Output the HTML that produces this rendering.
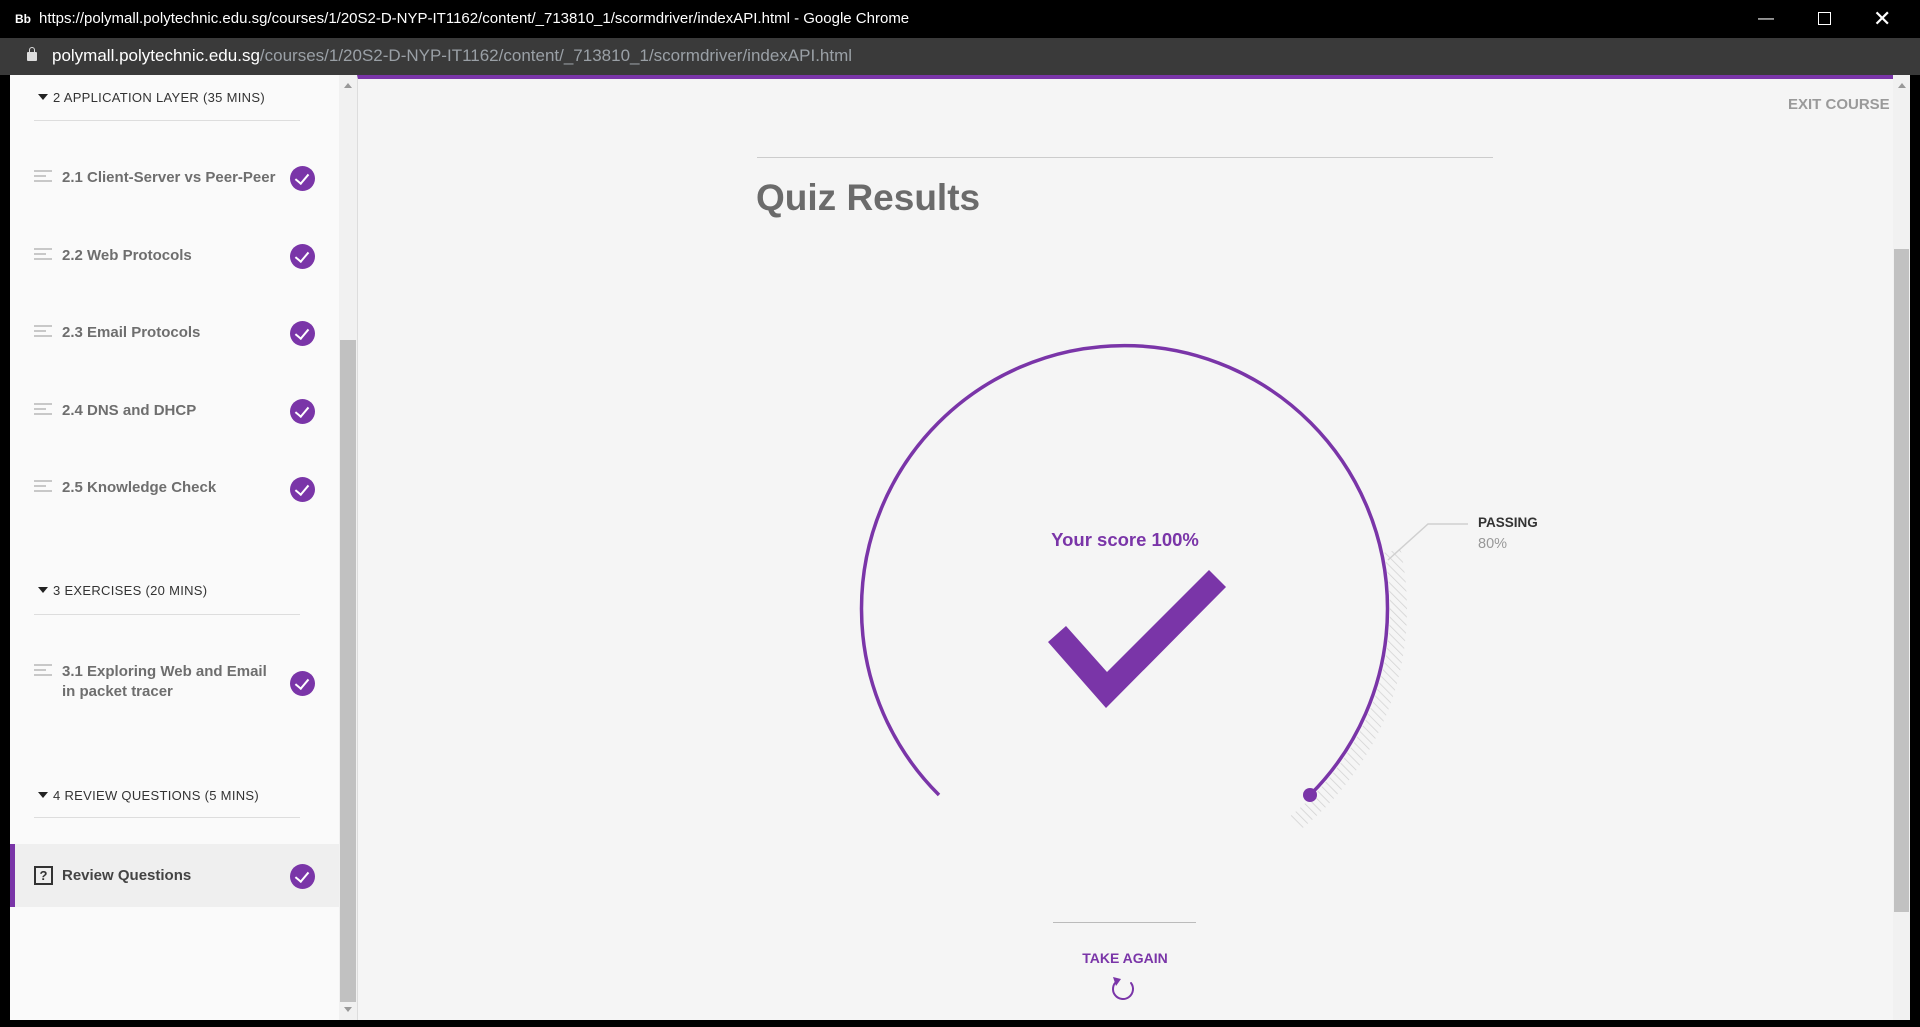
<!DOCTYPE html>
<html><head><meta charset="utf-8"><style>
*{margin:0;padding:0;box-sizing:border-box}
body{width:1920px;height:1027px;background:#000;position:relative;overflow:hidden;font-family:"Liberation Sans",sans-serif}
.abs{position:absolute}
#title{left:0;top:0;width:1920px;height:38px;background:#000;color:#fff;font-size:15px;line-height:38px}
#addr{left:0;top:38px;width:1920px;height:37px;background:#3a3a3a;color:#9aa0a6;font-size:17px;line-height:36px}
#side{left:10px;top:75px;width:329px;height:945px;background:#fafafa}
#sscroll{left:339px;top:75px;width:18px;height:945px;background:#f1f1f1}
#main{left:357px;top:75px;width:1536px;height:945px;background:#f5f5f5;border-top:4px solid #7a35a8;border-left:1px solid #ddd}
#mscroll{left:1893px;top:75px;width:17px;height:945px;background:#f1f1f1}
.hdr{left:53px;font-size:13px;color:#333;letter-spacing:.3px}
.hdr:before{content:"";position:absolute;left:-15px;top:4px;border-left:5px solid transparent;border-right:5px solid transparent;border-top:6px solid #222}
.div{left:34px;width:266px;height:1px;background:#ddd}
.item{left:62px;font-size:15px;font-weight:bold;color:#6e6e6e;line-height:20px}
.lines{left:34px;width:18px;height:12px}
.lines i{display:block;height:2px;background:#c8c8c8;margin-bottom:3px}
.ck{left:290px;width:25px;height:25px;border-radius:50%;background:#7a35a8}
.ck:after{content:"";position:absolute;left:8px;top:5px;width:6px;height:11px;border-right:2.5px solid #fff;border-bottom:2.5px solid #fff;transform:rotate(40deg)}
</style></head><body>
<div id="title" class="abs"><span style="font-weight:bold;font-size:12px;margin-left:15px;margin-right:8px">Bb</span>https://polymall.polytechnic.edu.sg/courses/1/20S2-D-NYP-IT1162/content/_713810_1/scormdriver/indexAPI.html - Google Chrome
<span class="abs" style="left:1758px;top:0;font-size:16px">—</span>
<span class="abs" style="left:1818px;top:12px;width:13px;height:13px;border:1.5px solid #fff"></span>
<span class="abs" style="left:1873px;top:0;font-size:22px">✕</span></div>
<div id="addr" class="abs"><span class="abs" style="left:27px;top:14px;width:10px;height:9px;background:#ddd;border-radius:1px"></span><span class="abs" style="left:29px;top:9px;width:6px;height:7px;border:1.5px solid #ddd;border-bottom:none;border-radius:3px 3px 0 0"></span><span style="margin-left:52px;color:#fff">polymall.polytechnic.edu.sg</span>/courses/1/20S2-D-NYP-IT1162/content/_713810_1/scormdriver/indexAPI.html</div>

<div id="side" class="abs"></div>
<div class="abs hdr" style="top:90px">2 APPLICATION LAYER (35 MINS)</div>
<div class="abs div" style="top:120px"></div>

<div class="abs lines" style="top:170px"><i></i><i style="width:12px"></i><i></i></div>
<div class="abs item" style="top:168px">2.1 Client-Server vs Peer-Peer</div><div class="abs ck" style="top:166px"></div>
<div class="abs lines" style="top:248px"><i></i><i style="width:12px"></i><i></i></div>
<div class="abs item" style="top:246px">2.2 Web Protocols</div><div class="abs ck" style="top:244px"></div>
<div class="abs lines" style="top:325px"><i></i><i style="width:12px"></i><i></i></div>
<div class="abs item" style="top:323px">2.3 Email Protocols</div><div class="abs ck" style="top:321px"></div>
<div class="abs lines" style="top:403px"><i></i><i style="width:12px"></i><i></i></div>
<div class="abs item" style="top:401px">2.4 DNS and DHCP</div><div class="abs ck" style="top:399px"></div>
<div class="abs lines" style="top:480px"><i></i><i style="width:12px"></i><i></i></div>
<div class="abs item" style="top:478px">2.5 Knowledge Check</div><div class="abs ck" style="top:477px"></div>

<div class="abs hdr" style="top:583px">3 EXERCISES (20 MINS)</div>
<div class="abs div" style="top:614px"></div>
<div class="abs lines" style="top:664px"><i></i><i style="width:12px"></i><i></i></div>
<div class="abs item" style="top:662px">3.1 Exploring Web and Email<br>in packet tracer</div><div class="abs ck" style="top:671px"></div>

<div class="abs hdr" style="top:788px">4 REVIEW QUESTIONS (5 MINS)</div>
<div class="abs div" style="top:817px"></div>
<div class="abs" style="left:10px;top:844px;width:329px;height:63px;background:#efefef;border-left:5px solid #7a35a8"></div>
<div class="abs" style="left:34px;top:866px;width:19px;height:19px;border:2px solid #333;font-size:13px;font-weight:bold;text-align:center;line-height:15px;color:#333">?</div>
<div class="abs item" style="top:866px;color:#444">Review Questions</div><div class="abs ck" style="top:864px"></div>

<div id="sscroll" class="abs"><div class="abs" style="left:5px;top:8px;border-left:4px solid transparent;border-right:4px solid transparent;border-bottom:5px solid #999"></div><div class="abs" style="left:1px;top:265px;width:16px;height:662px;background:#c1c1c1"></div><div class="abs" style="left:5px;top:932px;border-left:4px solid transparent;border-right:4px solid transparent;border-top:5px solid #999"></div></div>

<div id="main" class="abs"></div>
<div id="mscroll" class="abs"><div class="abs" style="left:1px;top:174px;width:15px;height:663px;background:#c1c1c1"></div><div class="abs" style="left:5px;top:8px;border-left:4px solid transparent;border-right:4px solid transparent;border-bottom:5px solid #999"></div></div>

<div class="abs" style="left:1788px;top:96px;font-size:15px;font-weight:bold;color:#9a9a9a">EXIT COURSE</div>
<div class="abs" style="left:757px;top:157px;width:736px;height:1px;background:#ccc"></div>
<div class="abs" style="left:756px;top:177px;font-size:37px;font-weight:bold;color:#6b6b6b">Quiz Results</div>

<svg class="abs" style="left:0;top:0" width="1920" height="1027">
<defs>
<pattern id="hp" width="6" height="6" patternUnits="userSpaceOnUse" patternTransform="rotate(-45)"><line x1="0" y1="0" x2="0" y2="6" stroke="#d2d2d2" stroke-width="1.5"/></pattern>
<clipPath id="cl"><circle cx="1125" cy="609" r="282"/></clipPath>
</defs>
<path d="M1125 609 L1386 555 A265 265 0 0 1 1310 795 Z" fill="none"/>
<g clip-path="url(#cl)"><path d="M1125 609 L1420 545 L1420 830 L1300 830 Z" fill="url(#hp)"/></g>
<circle cx="1125" cy="609" r="265" fill="#f5f5f5"/>
<path d="M939 795 A263 263 0 1 1 1310 795" fill="none" stroke="#7a35a8" stroke-width="3.5"/>
<circle cx="1310" cy="795" r="7" fill="#7a35a8"/>
<polyline points="1388,560 1428,524 1468,524" fill="none" stroke="#d0d0d0" stroke-width="1.5"/>
<polygon points="1048,642 1066,626 1107,672 1209,570 1226,587 1106,708" fill="#7a35a8"/>
<path d="M1131 983 A10 10 0 1 1 1117 981" fill="none" stroke="#7a35a8" stroke-width="2" stroke-linecap="round"/>
<polygon points="1113,977 1121,979 1116,986" fill="#7a35a8"/>
</svg>
<div class="abs" style="left:1478px;top:515px;font-size:13.5px;font-weight:bold;color:#333">PASSING</div>
<div class="abs" style="left:1478px;top:536px;font-size:14.5px;color:#999">80%</div>
<div class="abs" style="left:925px;top:529px;width:400px;text-align:center;font-size:18.5px;font-weight:bold;color:#7a35a8">Your score 100%</div>
<div class="abs" style="left:1053px;top:922px;width:143px;height:1px;background:#bbb"></div>
<div class="abs" style="left:1025px;top:950px;width:200px;text-align:center;font-size:14px;font-weight:bold;color:#7a35a8">TAKE AGAIN</div>
</body></html>
